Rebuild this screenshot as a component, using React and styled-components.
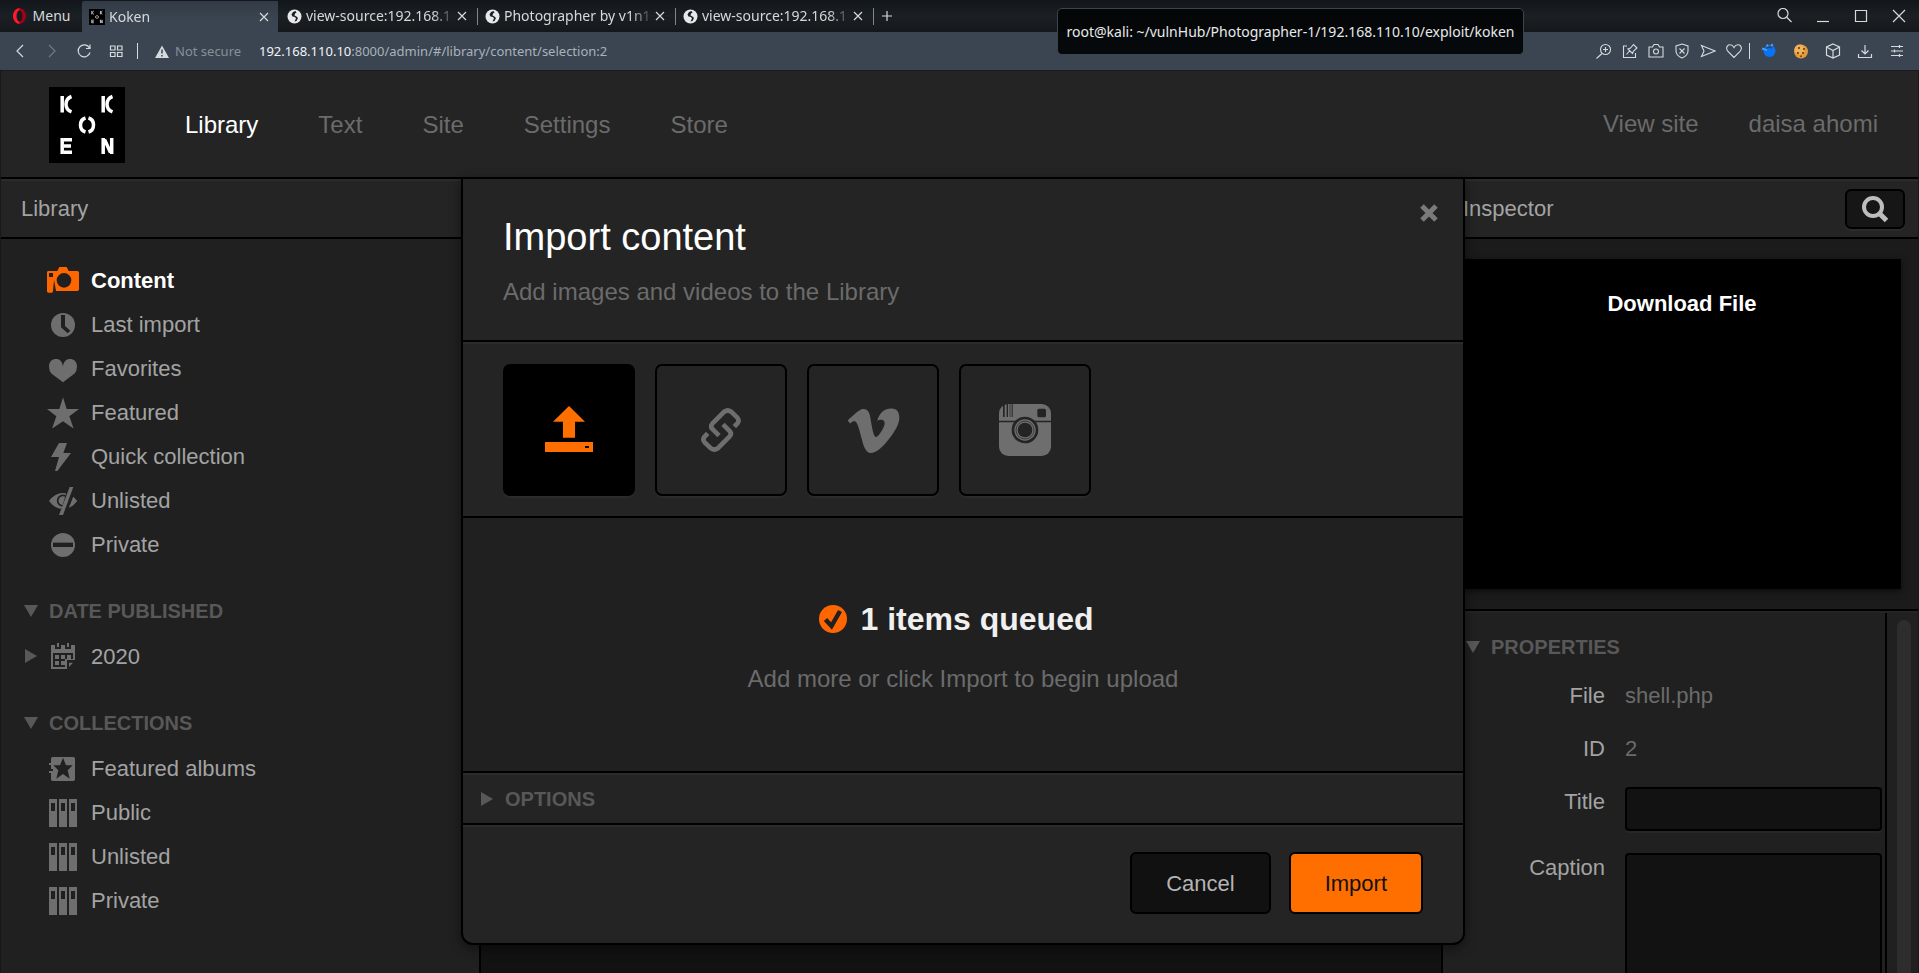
import React from "react";
import styled, { createGlobalStyle, css } from "styled-components";
import { FaVimeoV } from "react-icons/fa";

const c = {
  panel: "#242424",
  side: "#202020",
  well: "#121212",
  line: "#000",
  bevel: "#2b2b2b",
  text: "#a3a3a3",
  dim: "#6b6b6b",
  faint: "#585858",
  icon: "#6e6e6e",
  orange: "#ff6f00",
  bar: "#3a4551",
};

const GlobalStyle = createGlobalStyle`
  * { box-sizing: border-box; }
  body {
    margin: 0;
    background: #121212;
    color: ${c.text};
    font: 22px/28px "Liberation Sans", Arial, sans-serif;
  }
  button, input, textarea { font: inherit; color: inherit; }
  a { color: inherit; text-decoration: none; }
  h1, h2, h3, p, ul { margin: 0; padding: 0; font-weight: inherit; font-size: inherit; }
  ul { list-style: none; }
  svg { display: block; flex: none; }
`;

const Window = styled.div`
  display: flex;
  flex-direction: column;
  position: relative;
  height: 100vh;
  overflow: hidden;
`;

const chromeFont = css`
  font-family: "Noto Sans", "Open Sans", sans-serif;
  font-weight: 400;
`;

/* ---------- browser chrome ---------- */

const TabBar = styled.div`
  ${chromeFont}
  display: flex;
  height: 32px;
  flex: none;
  background: linear-gradient(#12161a, #1b2024 50%, #15181b);
  color: #d5d9dc;
  font-size: 14px;
  line-height: 32px;
`;

const BareButton = styled.button`
  display: flex;
  align-items: center;
  justify-content: center;
  border: 0;
  padding: 0;
  background: none;
  color: inherit;
  cursor: pointer;
`;

const MenuButton = styled(BareButton)`
  width: 82px;
  gap: 6px;
`;

const Tab = styled.div`
  display: flex;
  align-items: center;
  gap: 4px;
  width: 198px;
  padding: 0 8px 0 7px;
  margin-top: ${(p) => (p.$active ? "1px" : "0")};
  border-radius: 2px 2px 0 0;
  background: ${(p) => (p.$active ? "linear-gradient(#323b45, #3a4551 60%)" : "none")};
  background-size: 196px 100%;
  background-repeat: no-repeat;
`;

const TabTitle = styled(BareButton)`
  flex: 1;
  justify-content: flex-start;
  margin-right: -6px;
  white-space: nowrap;
  mask-image: linear-gradient(90deg, #000 84%, transparent);
`;

const TabClose = styled(BareButton)`
  width: 16px;
  height: 16px;
`;

const TabRule = styled.span`
  width: 1px;
  height: 17px;
  margin: 0 -8px 0 3px;
  background: #7f878e;
`;

const NewTab = styled(BareButton)`
  width: 26px;
`;

const WindowControls = styled.div`
  display: flex;
  align-items: center;
  gap: 14px;
  margin-left: auto;
  padding-right: 8px;
  & > button { width: 24px; }
`;

const AddressBar = styled.div`
  ${chromeFont}
  display: flex;
  align-items: center;
  flex: none;
  height: 39px;
  padding: 0 10px 0 9px;
  border-bottom: 1px solid #171a1e;
  background: ${c.bar};
  color: #d5dade;
  font-size: 13px;
`;

const NavButtons = styled.div`
  display: flex;
  gap: 10px;
  padding-right: 10px;
  border-right: 1px solid #d5dade;
  & > button { width: 22px; height: 16px; }
`;

const Security = styled.span`
  display: flex;
  align-items: center;
  gap: 6px;
  width: 121px;
  padding-left: 17px;
  color: #87909a;
  white-space: nowrap;
`;

const Url = styled.div`
  flex: 1;
  color: #a9b2bb;
  & strong { color: #f2f4f5; font-weight: 400; }
`;

const ToolGroup = styled.div`
  display: flex;
  gap: ${(p) => p.$gap}px;
  padding: ${(p) => p.$pad};
  border-left: ${(p) => (p.$rule ? "1px solid #d5dade" : "0")};
  & > button { width: 16px; height: 16px; }
`;

const Tooltip = styled.div`
  ${chromeFont}
  position: absolute;
  top: 8px;
  right: 395px;
  z-index: 5;
  width: 467px;
  height: 47px;
  border: 1px solid #3c444c;
  border-radius: 5px;
  background: rgba(3, 5, 6, 0.94);
  color: #e8eaeb;
  font-size: 14px;
  line-height: 45px;
  text-align: center;
  white-space: nowrap;
`;

/* ---------- admin application ---------- */

const AppFrame = styled.div`
  display: flex;
  flex-direction: column;
  position: relative;
  flex: 1;
  min-height: 0;
  border: solid #15191e;
  border-width: 0 1px;
`;

const Header = styled.header`
  display: flex;
  align-items: center;
  height: 108px;
  flex: none;
  padding: 2px 40px 0 48px;
  border-bottom: 2px solid ${c.line};
  background: ${c.panel};
  color: ${c.dim};
  font-size: 24px;
`;

const MainNav = styled.nav`
  display: flex;
  gap: 60px;
  flex: 1;
  padding-left: 60px;
`;

const UserNav = styled.nav`
  display: flex;
  gap: 50px;
  padding-bottom: 2px;
`;

const NavLink = styled.a`
  color: ${(p) => (p.$active ? "#fff" : "inherit")};
`;

const Columns = styled.div`
  display: flex;
  flex: 1;
  min-height: 0;
`;

const Sidebar = styled.aside`
  display: flex;
  flex-direction: column;
  flex: none;
  width: 480px;
  border-right: 2px solid ${c.line};
  background: ${c.side};
`;

const Stage = styled.main`
  flex: 1;
  background: ${c.well};
`;

const Inspector = styled.aside`
  display: flex;
  flex-direction: column;
  flex: none;
  width: 477px;
  border-left: 2px solid ${c.line};
  background: ${c.side};
`;

const PanelHead = styled.div`
  display: flex;
  align-items: center;
  justify-content: space-between;
  flex: none;
  height: 60px;
  padding: 0 13px 0 20px;
  border-top: 2px solid ${c.bevel};
  border-bottom: 2px solid ${c.line};
  background: ${c.panel};
`;

const SearchButton = styled(BareButton)`
  width: 60px;
  height: 40px;
  border: 2px solid #000;
  border-radius: 6px;
  background: #161616;
  box-shadow: 0 2px 0 #2b2b2b;
`;

const Lists = styled.div`
  display: flex;
  flex-direction: column;
  gap: 22px;
  padding: 19px 0 0 23px;
`;

const SectionHeading = styled.h2`
  color: ${c.faint};
  font-size: 20px;
  font-weight: 700;
  line-height: 46px;
  text-transform: uppercase;
`;

const Disclosure = styled(BareButton)`
  gap: 11px;
  text-transform: inherit;
`;

const Item = styled.li`
  display: flex;
  align-items: center;
  height: 44px;
`;

const ItemSlot = styled.span`
  display: flex;
  width: 23px;
  padding-left: 1px;
  color: ${c.faint};
`;

const ItemLink = styled.a`
  display: flex;
  align-items: center;
  gap: 12px;
  line-height: 42px;
  color: ${(p) => (p.$active ? "#fff" : c.text)};
  font-weight: ${(p) => (p.$active ? 700 : 400)};
  & > svg { color: ${(p) => (p.$active ? "#ff6600" : c.icon)}; }
`;

const ItemLabel = styled.span`
  padding-top: 2px;
`;

const PreviewArea = styled.div`
  flex: none;
  padding: 20px 17px 20px 20px;
  border-bottom: 2px solid ${c.line};
  background: #1b1b1b;
`;

const Preview = styled.div`
  height: 330px;
  padding-top: 31px;
  background: #000;
  box-shadow: 0 2px 6px rgba(0, 0, 0, 0.6);
  color: #fff;
  font-weight: 700;
  text-align: center;
`;

const Properties = styled.div`
  display: flex;
  flex: 1;
  min-height: 0;
  border-top: 2px solid ${c.panel};
`;

const PropertyForm = styled.form`
  flex: 1;
  overflow: hidden;
  padding: 11px 3px 0 0;
  border-right: 2px solid ${c.line};
`;

const FormHeading = styled(SectionHeading)`
  padding: 0 0 11px 23px;
`;

const Field = styled.div`
  display: grid;
  grid-template-columns: 162px 1fr;
  gap: 20px;
  min-height: 31px;
  margin-bottom: 22px;
  line-height: 29px;
  & > :first-child { text-align: right; }
`;

const Value = styled.span`
  color: ${c.dim};
`;

const inputLook = css`
  width: 100%;
  border: 2px solid #000;
  border-radius: 4px;
  background: #121212;
  box-shadow: 0 2px 0 #262626;
  padding: 0 8px;
`;

const TextInput = styled.input`
  ${inputLook}
  height: 44px;
`;

const TextArea = styled.textarea`
  ${inputLook}
  height: 180px;
  resize: none;
`;

const ScrollTrack = styled.div`
  width: 31px;
  padding: 7px 7px 0 10px;
`;

const ScrollThumb = styled.div`
  height: 100%;
  border-radius: 7px 7px 0 0;
  background: #2d2d2d;
`;

/* ---------- import dialog ---------- */

const Overlay = styled.div`
  position: absolute;
  inset: 106px 0 0;
  display: flex;
  align-items: flex-start;
  justify-content: center;
  padding-left: 7px;
`;

const Dialog = styled.section`
  width: 1004px;
  border: 2px solid ${c.line};
  border-radius: 0 0 12px 12px;
  background: ${c.panel};
  box-shadow: 0 4px 12px rgba(0, 0, 0, 0.45);
`;

const DialogHead = styled.div`
  display: flex;
  justify-content: space-between;
  align-items: flex-start;
  padding: 35px 25px 30px 40px;
`;

const DialogTitle = styled.h1`
  color: #fff;
  font-size: 38px;
  line-height: 46px;
`;

const Lead = styled.p`
  color: ${c.dim};
  font-size: 24px;
  line-height: 36px;
`;

const TitleBlock = styled.div`
  display: flex;
  flex-direction: column;
  gap: 14px;
`;

const CloseButton = styled(BareButton)`
  width: 18px;
  height: 18px;
  margin-top: -10px;
  color: #7a7a7a;
`;

const Sources = styled.div`
  display: flex;
  gap: 20px;
  padding: 22px 40px 20px;
  border-top: 2px solid ${c.line};
  border-bottom: 2px solid ${c.line};
  box-shadow: inset 0 2px 0 ${c.bevel};
`;

const Source = styled(BareButton)`
  width: 132px;
  height: 132px;
  border: 2px solid #000;
  border-radius: 7px;
  background: ${(p) => (p.$active ? "#000" : "transparent")};
  color: ${(p) => (p.$active ? c.orange : c.icon)};
  box-shadow: 0 2px 0 ${c.bevel};
`;

const Queue = styled.div`
  display: flex;
  flex-direction: column;
  align-items: center;
  gap: 22px;
  padding: 81px 0 74px;
  background: ${c.side};
`;

const QueueTitle = styled.h2`
  display: flex;
  align-items: center;
  gap: 14px;
  padding-right: 14px;
  color: #f0f0f0;
  font-size: 32px;
  font-weight: 700;
  line-height: 40px;
`;

const Options = styled.div`
  display: flex;
  padding-left: 18px;
  border-top: 2px solid ${c.line};
  border-bottom: 2px solid ${c.line};
  box-shadow: inset 0 2px 0 ${c.bevel};
  & > h2 { padding-top: 2px; line-height: 48px; }
  & button { gap: 12px; }
`;

const Actions = styled.div`
  display: flex;
  justify-content: flex-end;
  gap: 18px;
  padding: 27px 40px 29px;
  box-shadow: inset 0 2px 0 ${c.bevel};
`;

const ActionButton = styled.button`
  height: 62px;
  padding: 2px 34px 0;
  border: 2px solid #000;
  border-radius: 6px;
  background: ${(p) => (p.$primary ? c.orange : "#111")};
  color: ${(p) => (p.$primary ? "#111" : "#b4b4b4")};
`;

/* ---------- drawings ---------- */

const Stroke = ({ size = 16, children, w = 1.2, ...rest }) => (
  <svg width={size} height={size} viewBox="0 0 16 16" fill="none" stroke="currentColor" strokeWidth={w} aria-hidden="true" {...rest}>
    {children}
  </svg>
);

const Cross = ({ size = 16, w = 1.2 }) => (
  <Stroke size={size} w={w}><path d="M4 4l8 8M12 4l-8 8" /></Stroke>
);

const OperaIcon = () => (
  <svg width="15" height="16" viewBox="0 0 15 16" aria-hidden="true">
    <ellipse cx="7.5" cy="8" rx="6.500" ry="7.800" fill="#a70014" />
    <path d="M7.5 .2C4 .2 1 3.700 1 8s3 7.800 6.500 7.800V.2z" fill="#ff1b2d" />
    <ellipse cx="7.5" cy="8" rx="3" ry="5.800" fill="#171b1f" />
  </svg>
);

const Globe = () => (
  <svg width="15" height="15" viewBox="0 0 15 15" aria-hidden="true">
    <circle cx="7.5" cy="7.5" r="7" fill="#e6e8ea" />
    <path d="M8.500 2L6 3 4.500 5.500 5.500 7.500 8 8 9 9.500 7.500 12.500 9.500 12 11 9 9.500 7.500 7.500 6.500 8 4.500 9.500 3.500z" fill="#1a1e22" />
  </svg>
);

const KokenMark = ({ size }) => (
  <svg width={size} height={size} viewBox="0 0 76 76" role="img" aria-label="Koken">
    <rect width="76" height="76" fill="#000" />
    <g fill="none" stroke="#fff" strokeWidth="3.500">
      <path d="M13.200 9v16.500M22.500 9.500q-5.500 2-5.500 7.700t5.500 7.700M54.200 9v16.500M63.500 9.500q-5.500 2-5.500 7.700t5.500 7.700" />
      <path d="M36.500 31q-5 1.500-5 7t5 7M39.500 31q5 1.500 5 7t-5 7" />
      <path d="M13.200 51v16M15 52.700h8M15 59h7M15 65.300h8M54.200 51v16M62.700 51v16M55.500 52.500l6 13" />
    </g>
  </svg>
);

const Triangle = ({ open }) =>
  open ? (
    <svg width="14" height="12" viewBox="0 0 14 12" fill="currentColor" aria-hidden="true"><path d="M0 0h14L7 12z" /></svg>
  ) : (
    <svg width="12" height="14" viewBox="0 0 12 14" fill="currentColor" aria-hidden="true"><path d="M0 0v14L12 7z" /></svg>
  );

const Glyph = ({ box, children, size = 32 }) => (
  <svg width={size} height={size} viewBox={box} fill="currentColor" aria-hidden="true">{children}</svg>
);

const shelf = (
  <Glyph box="141 648 96 96">
    <path fillRule="evenodd" d="M147 657h24v84h-24zM177 657h24v84h-24zM207 657h24v84h-24zM153 669v24h12v-24zM183 669v24h12v-24zM213 669v24h12v-24z" />
  </Glyph>
);

const glyphs = {
  camera: (
    <Glyph box="141 72 96 96">
      <path fillRule="evenodd" d="M141 97q0-4 4-4h27l6-12h22l6 12h26q5 0 5 5v50q0 5-5 5h-64l-6-33-3 34q0 4-4 4h-10q-4 0-4-4zM147 99v12h12v-12zM214 121a22 22 0 1 0-44 0 22 22 0 1 0 44 0z" />
    </Glyph>
  ),
  clock: (
    <Glyph box="141 204 96 96">
      <circle cx="189" cy="255" r="36" />
      <path d="M183 225h12v33l16 14-8 8-20-18z" fill={c.side} />
    </Glyph>
  ),
  heart: (
    <Glyph box="141 336 96 96">
      <path d="M189 427l-34-26q-8-8-8-21c0-16 10-23 21-23 12 0 19 8 21 22 2-14 9-22 21-22 11 0 21 7 21 23q0 13-8 21z" />
    </Glyph>
  ),
  star: (
    <Glyph box="141 468 96 96">
      <path d="M189 472l11 35h37l-29 22 13 37-32-22-33 22 13-37-28-22h37z" />
    </Glyph>
  ),
  bolt: (
    <Glyph box="141 600 96 96">
      <path d="M177 609h24l-11 30h23l-41 54h-7l12-42h-24z" />
    </Glyph>
  ),
  eye: (
    <Glyph box="141 732 96 96">
      <path d="M147 783q18-24 42-24t42 24q-18 24-42 24t-42-24z" />
      <circle cx="189" cy="782" r="16" fill="none" stroke={c.side} strokeWidth="5" />
      <path d="M218 735l-28 93" stroke={c.side} strokeWidth="23" />
      <path d="M209 741h11l-31 84h-12z" />
      <path d="M231 783l-11-12-14 33q14-6 25-21z" />
    </Glyph>
  ),
  minus: (
    <Glyph box="141 864 96 96">
      <circle cx="189" cy="915" r="36" />
      <path d="M159 908h60v13h-60z" fill={c.side} />
    </Glyph>
  ),
  calendar: (
    <Glyph box="141 180 96 96">
      <path fillRule="evenodd" d="M153 195h12v12h18v-12h12v12h18v-12h12v45h-24v27h-48zM159 219v42h36v-24h24v-18z" />
      <path d="M171 189h6v12h-6zM201 189h6v12h-6zM165 225h12v12h-12zM183 225h12v12h-12zM201 225h12v12h-12zM165 243h12v12h-12zM183 243h12v12h-12zM207 248h12l-12 13z" />
    </Glyph>
  ),
  album: (
    <Glyph box="141 516 96 96">
      <path d="M158 531h62q5 0 5 5v62q0 5-5 5h-62q-5 0-5-5v-19h-6v-6h12v-6h-6v-12h-6v-6h6v-13q0-5 5-5z" />
      <path d="M189 533l9 23h20l-15 15 6 25-20-14-20 14 6-25-15-15h20z" fill={c.side} />
    </Glyph>
  ),
  shelf,
};

const UploadGlyph = () => (
  <Glyph size={52} box="9 27 156 156">
    <path fillRule="evenodd" d="M87 33l48 47h-30v48H69V80H39zM15 141h144v30H15zM135 153v6h12v-6z" />
  </Glyph>
);

const LinkGlyph = () => (
  <Glyph size={52} box="465 27 156 156">
    <g fill="none" stroke="currentColor" strokeWidth="14">
      <path d="M583 95l10-11q6-8-1-16l-19-18q-10-7-20 0l-36 36q-7 8 0 16l20 20" />
      <path d="M503 115l-10 11q-6 8 1 16l19 18q10 7 20 0l36-36q7-8 0-16l-20-20" />
    </g>
  </Glyph>
);

const InstaGlyph = () => (
  <Glyph size={52} box="1377 27 156 156">
    <rect x="1377" y="27" width="156" height="156" rx="28" />
    <path d="M1377 77h156v5h-156zM1389 27h5v39h-5zM1400 27h4v39h-4zM1409 27h2v39h-2zM1415 27h3v39h-3z" fill={c.panel} />
    <rect x="1492" y="41" width="26" height="26" rx="5" fill={c.panel} />
    <circle cx="1455" cy="105" r="40" fill={c.panel} />
    <circle cx="1455" cy="105" r="32" />
    <circle cx="1455" cy="105" r="27" fill="none" stroke={c.panel} strokeWidth="2" />
    <circle cx="1455" cy="105" r="22" fill={c.panel} />
  </Glyph>
);

const CheckGlyph = () => (
  <svg width="28" height="28" viewBox="0 0 28 28" aria-hidden="true">
    <circle cx="14" cy="14" r="14" fill="#ff6600" />
    <path d="M6.500 14.500l6 6.500L21 6" fill="none" stroke={c.side} strokeWidth="4.500" />
  </svg>
);

/* ---------- data ---------- */

const tabs = ["view-source:192.168.1", "Photographer by v1n1", "view-source:192.168.1"];

const library = [
  ["Content", "camera", true],
  ["Last import", "clock"],
  ["Favorites", "heart"],
  ["Featured", "star"],
  ["Quick collection", "bolt"],
  ["Unlisted", "eye"],
  ["Private", "minus"],
];

const collections = [
  ["Featured albums", "album"],
  ["Public", "shelf"],
  ["Unlisted", "shelf"],
  ["Private", "shelf"],
];

const tools = [
  ["Zoom", <><circle cx="9.500" cy="6.500" r="5" /><path d="M6 10.500L.5 15.500M7 6.500h5M9.500 4v5" /></>],
  ["Pin", <><path d="M5 3H1.500v11.500h12V10M4.500 11.500L7.500 8M6 6l4.500 4.500 1-2.500L15 5l-3.500-3.500L8.500 5z" /></>],
  ["Snapshot", <><path d="M1 4h3.500L6 1.500h4L11.500 4H15v10H1z" /><circle cx="8" cy="8.500" r="2.500" /></>],
  ["Ad blocker", <><path d="M8 1l6 2v5q0 4.500-6 7-6-2.500-6-7V3zM5.500 5.500l5 5M10.500 5.500l-5 5" /></>],
  ["Flow", <path d="M1.500 2.500L15 8 1.500 13.500 4 8z" />],
  ["Bookmark", <path d="M8 14.500L2 8.500q-3-4 .5-6.500Q6 .8 8 4.500 10 .8 13.500 2q3.500 2.500.5 6.500z" />],
];

const Section = ({ title, children }) => (
  <section>
    <SectionHeading><Disclosure type="button"><Triangle open />{title}</Disclosure></SectionHeading>
    <ul>{children}</ul>
  </section>
);

const Row = ({ label, glyph, active, expandable }) => (
  <Item>
    <ItemSlot>
      {expandable && <BareButton type="button" aria-label={`Expand ${label}`}><Triangle /></BareButton>}
    </ItemSlot>
    <ItemLink href="#" $active={active}>{glyphs[glyph]}<ItemLabel>{label}</ItemLabel></ItemLink>
  </Item>
);

export default function App() {
  return (
    <Window>
      <GlobalStyle />
      <TabBar>
        <MenuButton type="button"><OperaIcon />Menu</MenuButton>
        <Tab $active>
          <KokenMark size={16} />
          <TabTitle type="button">Koken</TabTitle>
          <TabClose type="button" aria-label="Close tab"><Cross /></TabClose>
        </Tab>
        {tabs.map((t, i) => (
          <Tab key={i}>
            <Globe />
            <TabTitle type="button">{t}</TabTitle>
            <TabClose type="button" aria-label="Close tab"><Cross /></TabClose>
            <TabRule />
          </Tab>
        ))}
        <NewTab type="button" aria-label="New tab">
          <Stroke><path d="M8 3v10M3 8h10" /></Stroke>
        </NewTab>
        <WindowControls>
          <BareButton type="button" aria-label="Search tabs"><Stroke><circle cx="6" cy="5.500" r="5" /><path d="M9.500 9l5 5" /></Stroke></BareButton>
          <BareButton type="button" aria-label="Minimize"><Stroke><path d="M2 13.500h12" /></Stroke></BareButton>
          <BareButton type="button" aria-label="Maximize"><Stroke><path d="M2.500 2.500h11v11h-11z" /></Stroke></BareButton>
          <BareButton type="button" aria-label="Close window"><Stroke><path d="M2 2l12 12M14 2L2 14" /></Stroke></BareButton>
        </WindowControls>
      </TabBar>

      <AddressBar>
        <NavButtons>
          <BareButton type="button" aria-label="Back"><Stroke><path d="M11 2L5 8l6 6" /></Stroke></BareButton>
          <BareButton type="button" aria-label="Forward"><Stroke opacity="0.35"><path d="M5 2l6 6-6 6" /></Stroke></BareButton>
          <BareButton type="button" aria-label="Reload"><Stroke><path d="M13.500 5A6 6 0 1 0 14 9.500M14 1.500V5.500H10" /></Stroke></BareButton>
          <BareButton type="button" aria-label="Speed dial"><Stroke><path d="M2.500 3h4.500v4H2.500zM9.500 3H14v4H9.500zM2.500 9.500h4.500v4H2.500zM9.500 9.500H14v4H9.500z" /></Stroke></BareButton>
        </NavButtons>
        <Security>
          <svg width="14" height="13" viewBox="0 0 14 13" aria-hidden="true">
            <path d="M7 .5L14 13H0z" fill="#d5dade" />
            <path d="M7 4.500v4M7 10v1.500" stroke={c.bar} strokeWidth="1.500" />
          </svg>
          Not secure
        </Security>
        <Url><strong>192.168.110.10</strong>:8000/admin/#/library/content/selection:2</Url>
        <ToolGroup $gap={10} $pad="0 7px 0 0">
          {tools.map(([label, art]) => (
            <BareButton key={label} type="button" aria-label={label}><Stroke w={1.1}>{art}</Stroke></BareButton>
          ))}
        </ToolGroup>
        <ToolGroup $gap={16} $pad="0 4px 0 11px" $rule>
          <BareButton type="button" aria-label="Proxy">
            <svg width="16" height="16" viewBox="0 0 16 16" aria-hidden="true">
              <circle cx="8.500" cy="8" r="6" fill="#0a72f5" />
              <path d="M1 5.500l5 1.500M5.500 3.500l1.500-2M10 2.500l2-1" stroke="#3ea0ff" strokeWidth="2" />
              <path d="M5 5.500q3-2 6-.5" stroke={c.bar} strokeWidth="1.500" fill="none" />
            </svg>
          </BareButton>
          <BareButton type="button" aria-label="Cookies">
            <svg width="16" height="16" viewBox="0 0 16 16" aria-hidden="true">
              <circle cx="8" cy="8.500" r="7" fill="#e0993c" />
              <circle cx="6.500" cy="6.500" r="5" fill="#efb25c" />
              <path d="M5 4h2v2H5zM10 5h2v2h-2zM4 9h2v2H4zM9 9h2v2H9zM7 12.500h2V14H7z" fill="#8a4d12" />
            </svg>
          </BareButton>
          <BareButton type="button" aria-label="Extensions"><Stroke><path d="M8 1l6.500 3v8L8 15l-6.500-3V4zM1.500 4L8 7.500 14.500 4M8 7.500V15" /></Stroke></BareButton>
          <BareButton type="button" aria-label="Downloads"><Stroke><path d="M8 2v8.500M4.500 7.500L8 11l3.500-3.500M1.500 11v3.500h13V11" /></Stroke></BareButton>
          <BareButton type="button" aria-label="Easy setup"><Stroke><path d="M2 3.500h12M2 8h12M2 12.500h12M10.500 2v3M5.500 6.500v3M10.500 11v3" /></Stroke></BareButton>
        </ToolGroup>
      </AddressBar>
      <Tooltip role="tooltip">root@kali: ~/vulnHub/Photographer-1/192.168.110.10/exploit/koken</Tooltip>

      <AppFrame>
        <Header>
          <KokenMark size={76} />
          <MainNav>
            <NavLink href="#" $active>Library</NavLink>
            <NavLink href="#">Text</NavLink>
            <NavLink href="#">Site</NavLink>
            <NavLink href="#">Settings</NavLink>
            <NavLink href="#">Store</NavLink>
          </MainNav>
          <UserNav>
            <NavLink href="#">View site</NavLink>
            <NavLink href="#">daisa ahomi</NavLink>
          </UserNav>
        </Header>

        <Columns>
          <Sidebar>
            <PanelHead>Library</PanelHead>
            <Lists>
              <ul>{library.map(([l, g, a]) => <Row key={l} label={l} glyph={g} active={a} />)}</ul>
              <Section title="Date published"><Row label="2020" glyph="calendar" expandable /></Section>
              <Section title="Collections">{collections.map(([l, g]) => <Row key={l} label={l} glyph={g} />)}</Section>
            </Lists>
          </Sidebar>
          <Stage />
          <Inspector>
            <PanelHead>
              Inspector
              <SearchButton type="button" aria-label="Search">
                <svg width="28" height="28" viewBox="0 0 28 28" fill="none" stroke="#bdbdbd" aria-hidden="true">
                  <circle cx="12" cy="12" r="9" strokeWidth="4" />
                  <path d="M18.500 18.500l7 7" strokeWidth="5" />
                </svg>
              </SearchButton>
            </PanelHead>
            <PreviewArea><Preview><a href="#">Download File</a></Preview></PreviewArea>
            <Properties>
              <PropertyForm>
                <FormHeading><Disclosure type="button"><Triangle open />Properties</Disclosure></FormHeading>
                <Field><span>File</span><Value>shell.php</Value></Field>
                <Field><span>ID</span><Value>2</Value></Field>
                <Field><label htmlFor="title">Title</label><TextInput id="title" /></Field>
                <Field><label htmlFor="caption">Caption</label><TextArea id="caption" /></Field>
              </PropertyForm>
              <ScrollTrack><ScrollThumb /></ScrollTrack>
            </Properties>
          </Inspector>
        </Columns>

        <Overlay>
          <Dialog role="dialog" aria-labelledby="import-title">
            <DialogHead>
              <TitleBlock>
                <DialogTitle id="import-title">Import content</DialogTitle>
                <Lead>Add images and videos to the Library</Lead>
              </TitleBlock>
              <CloseButton type="button" aria-label="Close">
                <svg width="18" height="18" viewBox="0 0 18 18" stroke="currentColor" strokeWidth="5" aria-hidden="true"><path d="M2 2l14 14M16 2L2 16" /></svg>
              </CloseButton>
            </DialogHead>
            <Sources>
              <Source type="button" $active aria-label="Upload"><UploadGlyph /></Source>
              <Source type="button" aria-label="Link"><LinkGlyph /></Source>
              <Source type="button" aria-label="Vimeo"><FaVimeoV size={59} /></Source>
              <Source type="button" aria-label="Instagram"><InstaGlyph /></Source>
            </Sources>
            <Queue>
              <QueueTitle><CheckGlyph />1 items queued</QueueTitle>
              <Lead>Add more or click Import to begin upload</Lead>
            </Queue>
            <Options>
              <SectionHeading><Disclosure type="button"><Triangle />Options</Disclosure></SectionHeading>
            </Options>
            <Actions>
              <ActionButton type="button">Cancel</ActionButton>
              <ActionButton type="button" $primary>Import</ActionButton>
            </Actions>
          </Dialog>
        </Overlay>
      </AppFrame>
    </Window>
  );
}
